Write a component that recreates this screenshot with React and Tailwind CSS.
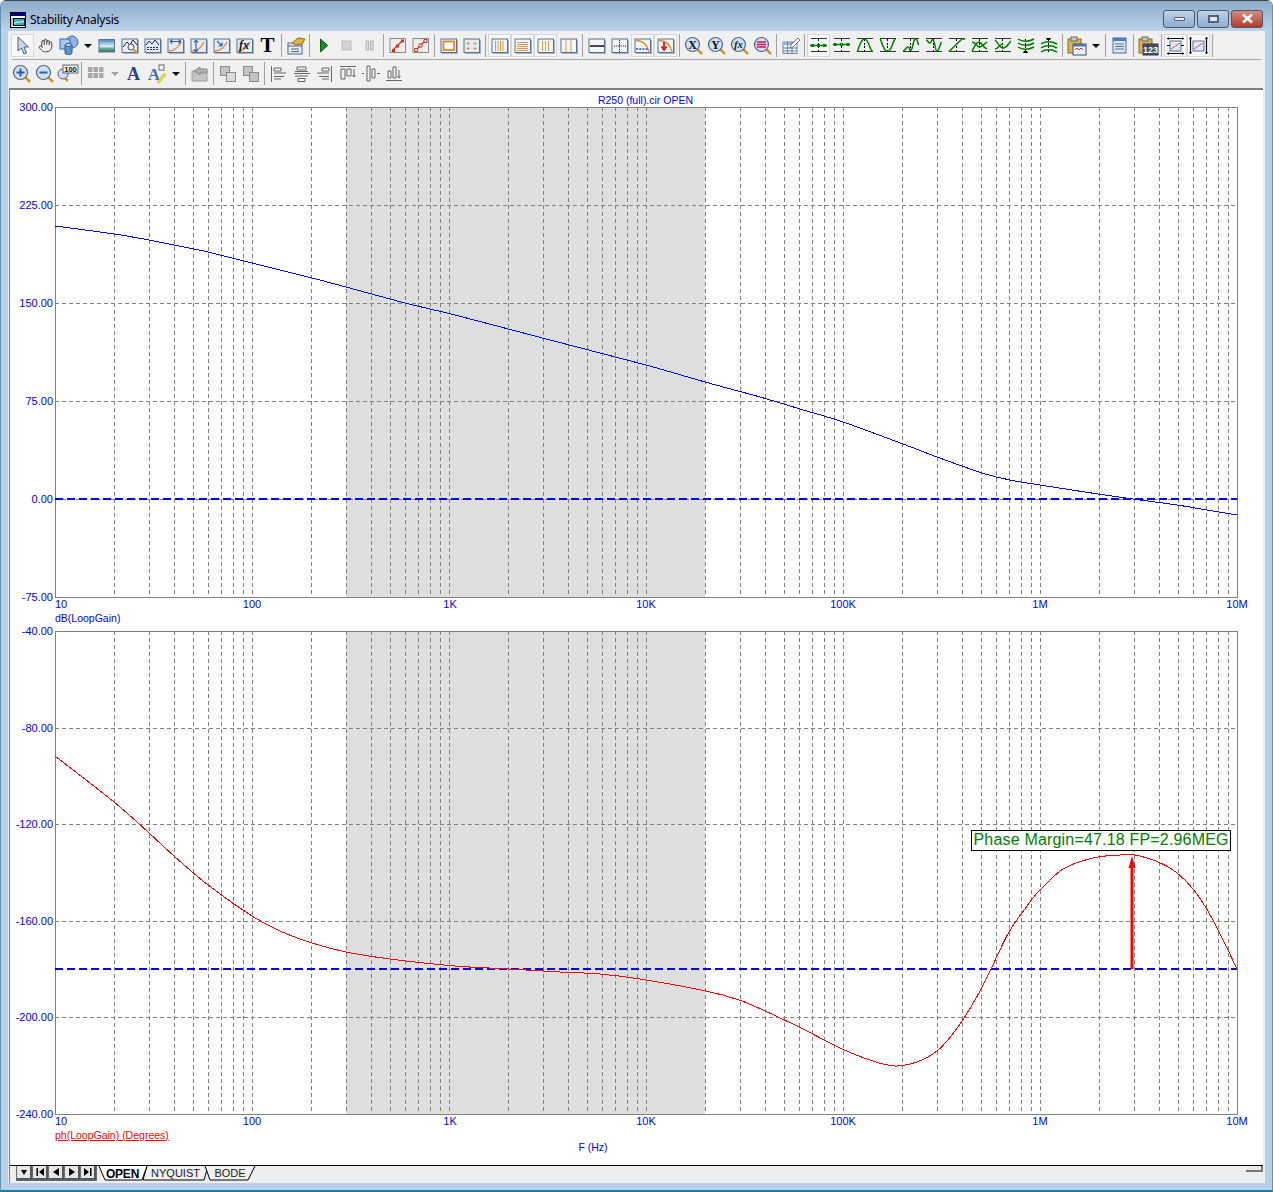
import React from 'react'
import { Hand } from 'lucide-react'

const SERIF = "font-['Liberation_Serif',serif]"
const DECADE = 197
const LEFT = 55
const RIGHT = 1237
const logX = f => LEFT + Math.log10(f / 10) * DECADE

const GRID_X = []
for (let d = 10; d < 1e7; d *= 10) {
  for (let m = 1; m < 10; m++) {
    if (d === 10 && m === 1) continue
    GRID_X.push(Math.round(logX(d * m)) + 0.5)
  }
}

const GAIN = [[55,226],[114,234],[149,240],[174,245],[208,252],[252,263],[312,278],[346,287],[405,303],[455,315],[550,340],[646,365],[705,382],[760,397],[800,409],[843,422],[903,444],[937,457],[962,466],[985,474],[1010,480],[1040,485],[1098,494],[1133,499],[1177,505],[1207,510],[1237,515]]
const PHASE = [[55,756],[114,802],[149,833],[174,856],[208,885],[252,916],[280,931],[312,943],[346,952],[390,959],[455,966],[509,969],[560,972],[600,974],[640,979],[706,991],[739,1000],[765,1011],[799,1027],[842,1049],[867,1059],[883,1064],[897,1066],[917,1062],[937,1051],[955,1031],[975,1000],[991,969],[1009,932],[1030,902],[1040,890],[1063,869],[1093,858],[1120,855],[1140,856],[1170,868],[1193,889],[1213,920],[1237,969]]

// catmull-rom through the read-off points
function smooth(pts) {
  let d = `M${pts[0][0]} ${pts[0][1]}`
  for (let i = 0; i < pts.length - 1; i++) {
    const p0 = pts[i - 1] || pts[i]
    const p1 = pts[i]
    const p2 = pts[i + 1]
    const p3 = pts[i + 2] || p2
    d += `C${p1[0] + (p2[0] - p0[0]) / 6} ${p1[1] + (p2[1] - p0[1]) / 6} ${p2[0] - (p3[0] - p1[0]) / 6} ${p2[1] - (p3[1] - p1[1]) / 6} ${p2[0]} ${p2[1]}`
  }
  return d
}

function Plot({ top, bottom, yLabels }) {
  const h = bottom - top
  return (
    <g>
      <rect x="346" y={top} width="359" height={h} fill="#dedede" />
      <g stroke="#808080" strokeDasharray="4 3" shapeRendering="crispEdges">
        {GRID_X.map(x => <line key={x} x1={x} x2={x} y1={top} y2={bottom} />)}
        {[1, 2, 3, 4].map(i => {
          const y = Math.round(top + (h * i) / 5) + 0.5
          return <line key={i} x1={LEFT} x2={RIGHT} y1={y} y2={y} />
        })}
      </g>
      <rect x={LEFT + 0.5} y={top + 0.5} width={RIGHT - LEFT} height={h} fill="none" stroke="#808080" shapeRendering="crispEdges" />
      <g fontSize="11" fill="#0000ff" textAnchor="end">
        {yLabels.map((t, i) => <text key={t} x="53" y={top + (h * i) / 5 + 4}>{t}</text>)}
      </g>
      <g fontSize="11" fill="#0000ff" textAnchor="middle">
        <text x="61" y={bottom + 11}>10</text>
        {[['100', 252], ['1K', 450], ['10K', 646], ['100K', 843], ['1M', 1040], ['10M', 1237]].map(([t, x]) => (
          <text key={t} x={x} y={bottom + 11}>{t}</text>
        ))}
      </g>
    </g>
  )
}

function Chart() {
  return (
    <svg width="1253" height="1075" viewBox="10 90 1253 1075" className="block">
      <text x="645.5" y="104" fontSize="10.5" fill="#0000ff" textAnchor="middle">R250 (full).cir OPEN</text>
      <Plot top={107} bottom={597} yLabels={['300.00', '225.00', '150.00', '75.00', '0.00', '-75.00']} />
      <Plot top={631} bottom={1114} yLabels={['-40.00', '-80.00', '-120.00', '-160.00', '-200.00', '-240.00']} />
      <line x1={LEFT} x2={RIGHT} y1="499" y2="499" stroke="#0000ff" strokeWidth="2" strokeDasharray="8 4" />
      <line x1={LEFT} x2={RIGHT} y1="969" y2="969" stroke="#0000ff" strokeWidth="2" strokeDasharray="8 4" />
      <path d={smooth(GAIN)} fill="none" stroke="#0000ff" shapeRendering="crispEdges" />
      <path d={smooth(PHASE)} fill="none" stroke="#ff0000" shapeRendering="crispEdges" />
      <line x1="1132" x2="1132" y1="969" y2="862" stroke="#ff0000" strokeWidth="3" />
      <path d="M1132 856l3.500 12h-7z" fill="#ff0000" />
      <text x="55" y="622" fontSize="10.5" fill="#0000ff">dB(LoopGain)</text>
      <text x="55" y="1139" fontSize="10.5" fill="#ff0000" textDecoration="underline">ph(LoopGain) (Degrees)</text>
      <text x="593" y="1151" fontSize="10.5" fill="#0000ff" textAnchor="middle">F (Hz)</text>
      <rect x="971.5" y="830.5" width="259" height="20" fill="#ffffff" stroke="#000000" shapeRendering="crispEdges" />
      <text x="973.5" y="845" fontSize="16" fill="#008000" textLength="255">Phase Margin=47.18 FP=2.96MEG</text>
    </svg>
  )
}

// toolbar icons, 23x23 grid
const Ic = ({ children }) => <svg width="23" height="23" viewBox="0 0 23 23">{children}</svg>
const Frame = ({ fill = '#e3ebf5' }) => (
  <g>
    <rect x="5" y="6" width="16" height="14" fill="#a8b2c0" />
    <rect x="4" y="5" width="15.5" height="13.5" fill={fill} stroke="#5b7090" />
  </g>
)
const Curve = () => <path d="M5 17c5 0 9-3 12-9" fill="none" stroke="#ee8a22" strokeWidth="1.4" />
const Lens = ({ children }) => (
  <g>
    <path d="M15 15l5 5" stroke="#c99a2e" strokeWidth="2.5" />
    <circle cx="10.5" cy="10.5" r="7" fill="#cfe0f5" stroke="#51657f" strokeWidth="1.2" />
    {children}
  </g>
)
const Green = ({ d, children, lines = true }) => (
  <Ic>
    {lines && <path d="M3.500 4.500h16M3.500 17.500h16" stroke="#333" shapeRendering="crispEdges" />}
    <path d="M11.500 5v13" stroke="#000" strokeDasharray="2 1.500" shapeRendering="crispEdges" />
    {d && <path d={d} fill="none" stroke="#008000" strokeWidth="1.500" />}
    {children}
  </Ic>
)
const Squares = ({ shade }) => (
  <g stroke="#8a8a8a">
    <rect x="4.500" y="4.500" width="9" height="9" fill="#c4c4c4" />
    <rect x="10.500" y="10.500" width="9" height="9" fill={shade} />
  </g>
)
const Align = ({ d }) => <Ic><path d={d} fill="none" stroke="#666" /></Ic>
const SerifMark = ({ children, y = 14.5, size = 12, italic }) => (
  <text x="10.5" y={y} fontSize={size} fontWeight="700" fontStyle={italic ? 'italic' : 'normal'} textAnchor="middle" fill="#111" className={SERIF}>{children}</text>
)

const ICONS = {
  arrow: <Ic><path d="M7 3v14l3.500-3 2.500 6 2.500-1-2.500-6h4.500z" fill="#c8d6ea" stroke="#4d5f7c" /></Ic>,
  hand: <Ic><g transform="translate(4 4)"><Hand size={15} color="#444" strokeWidth={1.6} /></g></Ic>,
  shapes: (
    <Ic>
      <circle cx="15" cy="8" r="6" fill="#8db6e6" stroke="#3a6aa8" />
      <rect x="3" y="5" width="10" height="10" fill="#a9c8ee" stroke="#3a6aa8" />
      <path d="M8 11v8c0 2 7 2 7 0v-8z" fill="#5f92d1" stroke="#2f5c97" />
      <ellipse cx="11.500" cy="11" rx="3.500" ry="1.500" fill="#bcd6f4" stroke="#2f5c97" />
    </Ic>
  ),
  picture: (
    <Ic>
      <defs>
        <linearGradient id="sky" x1="0" y1="0" x2="0" y2="1">
          <stop offset="0" stopColor="#3d86c6" />
          <stop offset="0.55" stopColor="#dff0f5" />
          <stop offset="0.7" stopColor="#6fb38a" />
          <stop offset="1" stopColor="#2f6f7d" />
        </linearGradient>
      </defs>
      <rect x="4" y="5.500" width="15.500" height="12.500" fill="url(#sky)" stroke="#5f738f" />
    </Ic>
  ),
  zoomFrame: <Ic><Frame /><path d="M5 13l4-5 3 3 3-5 4 5" fill="none" stroke="#222" /><circle cx="13" cy="13" r="3" fill="#eaf2fb" stroke="#555" /><path d="M15 15l4 4" stroke="#c99a2e" strokeWidth="2" /></Ic>,
  dataFrame: <Ic><Frame /><path d="M5 11l3-4 3 3 3-4 4 5" fill="none" stroke="#1c2f6b" /><path d="M6 13.500h11M6 15.500h11" stroke="#1c2f6b" strokeDasharray="2 1" /></Ic>,
  fitX: <Ic><Frame /><Curve /><path d="M6 7.500h11M6 7.500l2.500-2M6 7.500l2.500 2M17 7.500l-2.500-2M17 7.500l-2.500 2" stroke="#2368b8" fill="none" strokeWidth="1.200" /></Ic>,
  fitY: <Ic><Frame /><Curve /><path d="M9 6v12M9 6l-2 2.500M9 6l2 2.500M9 18l-2-2.500M9 18l2-2.500" stroke="#2368b8" fill="none" strokeWidth="1.200" /></Ic>,
  fitXY: <Ic><Frame /><Curve /><path d="M7 7l5 5M12 12v-3.500M12 12h-3.500" stroke="#2368b8" fill="none" strokeWidth="1.200" /></Ic>,
  fx: <Ic><Frame /><Curve /><text x="6" y="15" fontSize="12" fontStyle="italic" fontWeight="700" fill="#111" className={SERIF}>fx</text></Ic>,
  bigT: <Ic><text x="11.500" y="18" fontSize="21" fontWeight="700" textAnchor="middle" fill="#000" className={SERIF}>T</text></Ic>,
  props: <Ic><rect x="4" y="9" width="14" height="11" fill="#e8eef6" stroke="#4d6280" /><path d="M4 12h14M7 15h8M7 17.500h8" stroke="#4d6280" /><path d="M8 9l6-5 7 1-3 5-6 1z" fill="#e3b23c" stroke="#8d6a16" /></Ic>,
  play: <Ic><path d="M8.500 5l7 6.500-7 6.500z" fill="#1b8a2a" stroke="#0e5c19" /></Ic>,
  stop: <Ic><rect x="7" y="7" width="9" height="9" fill="#d2d2d2" stroke="#bdbdbd" /></Ic>,
  pause: <Ic><path d="M8 7h2.500v9H8zM12.500 7H15v9h-2.500z" fill="#dcdcdc" stroke="#b0b0b0" /></Ic>,
  stepA: <Ic><rect x="4" y="4.500" width="15.500" height="14" fill="#f2ede8" stroke="#8a8a8a" /><path d="M6 17L17 6" stroke="#d3302b" strokeWidth="1.300" /><path d="M6 15h3v3H6zM10 10.500h3v3h-3zM15 5.500h3v3h-3z" fill="#d3302b" /></Ic>,
  stepB: <Ic><rect x="4" y="4.500" width="15.500" height="14" fill="#f2ede8" stroke="#8a8a8a" /><path d="M6 17L17 6" stroke="#d3302b" strokeWidth="1.300" /><path d="M5.500 14.500h3v3h-3zM10 10h3v3h-3zM15 5.500h3v3h-3z" fill="#f2ede8" stroke="#d3302b" /></Ic>,
  border: <Ic><Frame /><rect x="6.500" y="7.500" width="10.500" height="8.500" fill="#fff" stroke="#f07c00" strokeWidth="1.600" /></Ic>,
  corners: <Ic><Frame /><path d="M8 8v3M6.500 9.500h3M15 8v3M13.500 9.500h3M8 13v3M6.500 14.500h3M15 13v3M13.500 14.500h3" stroke="#ee8a22" /></Ic>,
  vert4: <Ic><Frame fill="#f2f5fa" /><path d="M7.500 7v10M10 7v10M12.500 7v10M15 7v10" stroke="#e29a3f" /></Ic>,
  horiz: <Ic><Frame fill="#f2f5fa" /><path d="M6 8.500h11M6 10.500h11M6 12.500h11M6 14.500h11M6 16.500h11" stroke="#e29a3f" /></Ic>,
  vert3: <Ic><Frame fill="#f2f5fa" /><path d="M8.500 7v10M11.500 7v10M14.500 7v10" stroke="#e29a3f" /></Ic>,
  vert2: <Ic><Frame fill="#f2f5fa" /><path d="M9 5v13M14 5v13" stroke="#e29a3f" /></Ic>,
  hline: <Ic><Frame fill="#f2f5fa" /><path d="M5 12h14" stroke="#000" strokeWidth="1.400" /></Ic>,
  cross: <Ic><Frame fill="#f2f5fa" /><path d="M6 12h12M11.500 6v12" stroke="#000" strokeDasharray="1 1.200" /></Ic>,
  arcLine: <Ic><Frame fill="#f2f5fa" /><path d="M5 6.500c6 0 11 4 13 11" fill="none" stroke="#ee8a22" strokeWidth="1.300" /><path d="M5 15h12" stroke="#1f3fcf" strokeWidth="1.300" strokeDasharray="2 1.200" /></Ic>,
  arcDown: <Ic><Frame fill="#f2f5fa" /><path d="M5 6.500c6 0 11 4 13 11" fill="none" stroke="#ee8a22" strokeWidth="1.300" /><path d="M10 8v7M7.500 12.500l2.500 3.500 2.500-3.500" fill="none" stroke="#e01515" strokeWidth="1.800" /></Ic>,
  lensX: <Ic><Lens><SerifMark>X</SerifMark></Lens></Ic>,
  lensY: <Ic><Lens><SerifMark>Y</SerifMark></Lens></Ic>,
  lensFx: <Ic><Lens><SerifMark y={14} size={10} italic>fx</SerifMark></Lens></Ic>,
  lensBars: <Ic><Lens><path d="M6 8h9M5.500 10.500h10M6 13h9" stroke="#d0104a" strokeWidth="1.600" /></Lens></Ic>,
  table: <Ic><rect x="4" y="8" width="14" height="11.500" fill="#eef3fa" stroke="#6f86a8" /><rect x="4" y="8" width="14" height="3" fill="#8fb0de" /><path d="M8.500 8v11M13 8v11M4 14h14M4 17h14" stroke="#6f86a8" /><path d="M12 11l7-7 2 2-7 7-3 1z" fill="#fff" stroke="#777" /></Ic>,
  g1: <Green d="M3 11.500h17"><path d="M4 10h3v3H4zM10 10h3v3h-3zM16 10h3v3h-3z" fill="#008000" /></Green>,
  g2: <Green d="M3 10.500h17"><path d="M3.500 9h3v3h-3zM10 9h3v3h-3zM16.500 9h3v3h-3z" fill="#008000" /></Green>,
  g3: <Green d="M4 17.500C6 16 7 5 11.500 5s5 11 8 12.500" />,
  g4: <Green d="M4 5c2 1.500 3 12.500 7.500 12.500S16.500 6.500 19.500 5" />,
  g5: <Green d="M4 17c2 0 3-4 5-4s1 4 3 3 2-10 4-11 3 4 3.500 6" />,
  g6: <Green d="M4 6c2 0 2 3 4 3s1-4 3-3 2 11 4 11 3-7 4.500-9" />,
  g7: <Green d="M4 17.500L17 5h3" />,
  g8: <Green d="M4 17c2-3 4-9 7-9s4 6 8 7M4 8c3 0 5 4 7 5s5-3 8-5" />,
  g9: <Green d="M4 6c3 2 4 8 8 8s5-4 8-7M4 15c3 0 5-5 8-5" />,
  g10: <Green lines={false} d="M4 5c4 3 11 3 16 0M4 9c4 3 11 3 16 0M4 13c4 3 11 3 16 0"><path d="M9 19h5l-1-2h-3z" fill="#000" /></Green>,
  g11: <Green lines={false} d="M4 18c4-3 11-3 16 0M4 14c4-3 11-3 16 0M4 10c4-3 11-3 16 0"><path d="M9 4h5l-1 2h-3z" fill="#000" /></Green>,
  clipWave: <Ic><rect x="3" y="5" width="13" height="14" fill="#d9b55a" stroke="#8d6a16" /><rect x="6" y="3" width="6" height="4" fill="#c9c9c9" stroke="#666" /><rect x="8" y="10" width="13" height="11" fill="#f0f4fa" stroke="#33507a" /><rect x="8" y="10" width="13" height="2.500" fill="#4c74a8" /><path d="M10 16l2-2 2 2 2-2 2 2" stroke="#d3302b" fill="none" /></Ic>,
  doc: <Ic><rect x="5" y="4" width="13" height="15" fill="#dbe6f6" stroke="#3f6ab0" /><rect x="5" y="4" width="13" height="3" fill="#4b7cc8" /><path d="M7 10h9M7 12.500h9M7 15h9" stroke="#5a6f90" /></Ic>,
  clip123: (
    <Ic>
      <rect x="3" y="5" width="13" height="14" fill="#d9b55a" stroke="#8d6a16" />
      <rect x="6" y="3" width="6" height="4" fill="#c9c9c9" stroke="#666" />
      <rect x="7" y="10" width="15" height="11" fill="#3f4f63" stroke="#2f3c4e" />
      <text x="14.500" y="19" fontSize="9" fontWeight="700" textAnchor="middle" fill="#fff">123</text>
    </Ic>
  ),
  fitH: <Ic><rect x="6" y="7" width="11" height="10" fill="#dbe6f6" stroke="#5f738f" /><path d="M7 15l9-6" stroke="#e0505a" /><path d="M3 4.500h17M3 19.500h17M3 11.500h3M17 11.500h3" stroke="#000" strokeWidth="1.200" /><path d="M3 4.500l2-1.500v3zM20 4.500l-2-1.500v3zM3 19.500l2-1.500v3zM20 19.500l-2-1.500v3z" /></Ic>,
  fitV: <Ic><rect x="6" y="7" width="11" height="10" fill="#dbe6f6" stroke="#5f738f" /><path d="M7 15l9-6" stroke="#e0505a" /><path d="M3.500 3v17M19.500 3v17" stroke="#000" strokeWidth="1.200" /><path d="M3.500 3L2 5h3zM19.500 3L18 5h3zM3.500 20L2 18h3zM19.500 20L18 18h3z" /></Ic>,
  zoomIn: <Ic><Lens><path d="M6.500 10.500h8M10.500 6.500v8" stroke="#2c5f9e" strokeWidth="2" /></Lens></Ic>,
  zoomOut: <Ic><Lens><path d="M6.500 10.500h8" stroke="#2c5f9e" strokeWidth="2" /></Lens></Ic>,
  zoom100: (
    <Ic>
      <path d="M8 15l4 4" stroke="#c99a2e" strokeWidth="2.500" />
      <circle cx="7" cy="12" r="5" fill="#cfe0f5" stroke="#51657f" />
      <rect x="7" y="3" width="15" height="8" fill="#f4f4f4" stroke="#666" />
      <text x="14.500" y="10" fontSize="7.500" fontWeight="700" textAnchor="middle" fill="#111">100</text>
    </Ic>
  ),
  grid: <Ic><path d="M4 5h4.500v5H4zM9.500 5H14v5H9.500zM15 5h4.500v5H15zM4 11h4.500v5H4zM9.500 11H14v5H9.500zM15 11h4.500v5H15z" fill="#a8a8a8" /></Ic>,
  fontA: <Ic><text x="11.500" y="18" fontSize="18" fontWeight="700" textAnchor="middle" fill="#1d4580" className={SERIF}>A</text></Ic>,
  fontColor: (
    <Ic>
      <text x="9" y="18" fontSize="17" fontWeight="700" textAnchor="middle" fill="#3b6fb5" className={SERIF}>A</text>
      <rect x="14" y="3" width="5" height="5" fill="#fff" stroke="#666" />
      <path d="M12 20l7-9 2 2-7 8z" fill="#f4dc38" stroke="#b69f1d" strokeWidth="0.500" />
    </Ic>
  ),
  folder: <Ic><path d="M4 9h15v10H4z" fill="#c4c4c4" stroke="#9a9a9a" /><path d="M6 9l6-4v2h7v4h-7v2z" fill="#b0b0b0" stroke="#8a8a8a" /></Ic>,
  front: <Ic><Squares shade="#dcdcdc" /></Ic>,
  back: <Ic><Squares shade="#c4c4c4" /></Ic>,
  alignL: <Align d="M4.500 4v16M7 6h7v3H7zM7 11h12M7 14.500h10M7 17h7" />,
  alignC: <Align d="M4 11.500h16M7 5h9v3H7zM5 9.500h13M5 14h13M8 16.500h7v3H8z" />,
  alignR: <Align d="M18.500 4v16M9 6h7v3H9zM4 11h12M6 14.500h10M9 17h7" />,
  alignT: <Align d="M4 4.500h16M5 7h4v10H5zM11 7h4v7h-4zM18 7v8M16.500 13l1.500 2 1.500-2" />,
  alignM: <Align d="M3 11.500h2M8 4h3v15H8zM13 7h3v9h-3zM18 11.500h3" />,
  alignB: <Align d="M4 18.500h16M6 9h3v7H6zM11 5h3v11h-3zM17 8v8M15.500 14l1.500 2 1.500-2" />,
}

const ROW_1 = ['arrow*', 'hand', 'shapes', '>', 'picture', 'zoomFrame', 'dataFrame', 'fitX', 'fitY', 'fitXY', 'fx', 'bigT', '|', 'props', '|', 'play', 'stop', 'pause', '|', 'stepA', 'stepB', '|', 'border', 'corners', '|', 'vert4*', 'horiz*', 'vert3*', 'vert2', '|', 'hline', 'cross', 'arcLine*', 'arcDown*', '|', 'lensX', 'lensY', 'lensFx', 'lensBars', '|', 'table', '|', 'g1*', 'g2', 'g3', 'g4', 'g5', 'g6', 'g7', 'g8', 'g9', 'g10', 'g11', '|', 'clipWave', '>', '|', 'doc', '|', 'clip123', '|', 'fitH*', 'fitV*', '|']
const ROW_2 = ['zoomIn', 'zoomOut', 'zoom100', '|', 'grid', '~', 'fontA', 'fontColor', '>', '|', 'folder', '|', 'front', 'back', '|', 'alignL', 'alignC', 'alignR', 'alignT', 'alignM', 'alignB']

function ToolItem({ name }) {
  if (name === '|') {
    return (
      <div className="w-[5px] h-[23px] flex justify-center">
        <div className="w-px h-full bg-[#a0a0a0]" />
      </div>
    )
  }
  if (name === '>' || name === '~') {
    return (
      <div className="w-[15px] h-[23px] flex items-center justify-center">
        <div className={`w-0 h-0 border-x-[4px] border-x-transparent border-t-[4px] ${name === '>' ? 'border-t-black' : 'border-t-[#a0a0a0]'}`} />
      </div>
    )
  }
  const selected = name.endsWith('*')
  return (
    <div className={`w-[23px] h-[23px] ${selected ? 'bg-[#f8f8f8] outline outline-[#d8d8d8] -outline-offset-1' : ''}`}>
      {ICONS[selected ? name.slice(0, -1) : name]}
    </div>
  )
}

const WIN_BTN = 'w-[32px] h-[18px] rounded-[3px] border border-[#46596f] flex items-center justify-center'

function TitleBar() {
  return (
    <div className="h-[31px] flex items-center pl-[9px] pr-[9px] pt-[7px] border-t border-[#3c4650] bg-linear-to-b from-[#8eabc9] to-[#bad2ec]">
      <svg width="16" height="16" viewBox="0 0 16 16" className="shrink-0">
        <rect width="16" height="16" fill="#fff" />
        <rect width="16" height="4" fill="#000080" />
        <rect x="0.500" y="0.500" width="15" height="15" fill="none" stroke="#000" />
        <rect x="3.500" y="6.500" width="11" height="7" fill="#29b3c6" stroke="#000" />
        <path d="M4 12c3-4 5 0 10-3" stroke="#fff" fill="none" />
        <path d="M1.500 7h1M1.500 9h1M1.500 11h1M1.500 13h1" stroke="#000" />
      </svg>
      <div className="ml-[4px] text-[12px] tracking-[-0.25px] text-black font-['Noto_Sans',sans-serif]">Stability Analysis</div>
      <div className="ml-auto flex gap-[2px] -mt-[2px]">
        <div className={`${WIN_BTN} bg-linear-to-b from-[#bcd2e8] to-[#8fadcc]`}>
          <div className="w-[11px] h-[4px] rounded-[1px] bg-[#e8eef5] border border-[#4d6280]" />
        </div>
        <div className={`${WIN_BTN} bg-linear-to-b from-[#bcd2e8] to-[#8fadcc]`}>
          <div className="w-[11px] h-[8px] bg-[#dfe8f2] border-2 border-[#4d6280]" />
        </div>
        <div className={`${WIN_BTN} bg-linear-to-b from-[#d98a7e] to-[#b03a2c]`}>
          <svg width="13" height="11" viewBox="0 0 13 11">
            <path d="M2 1.500l9 8M11 1.500l-9 8" stroke="#fff" strokeWidth="2.600" />
          </svg>
        </div>
      </div>
    </div>
  )
}

function NavButton({ d }) {
  return (
    <div className="w-[15px] h-[14px] bg-[#e6e6e6] border-r-2 border-b-2 border-[#555] flex items-center justify-center">
      <svg width="10" height="10" viewBox="0 0 10 10"><path d={d} fill="#000" /></svg>
    </div>
  )
}

function Tab({ label, box, viewBox, points, fill, className }) {
  return (
    <div className={`relative h-[15px] flex items-center justify-center ${box} ${className}`}>
      <svg viewBox={viewBox} className="absolute inset-0 w-full h-full">
        <polyline points={points} fill={fill} stroke="#000" />
      </svg>
      <span className="relative">{label}</span>
    </div>
  )
}

function TabBar() {
  return (
    <div className="h-[18px] border-t border-black bg-[#eeeeee] flex relative">
      <div className="ml-[6px] w-[81px] h-[15px] bg-[#6a6a6a] flex gap-px pl-[1px]">
        <NavButton d="M2 3h6L5 8z" />
        <NavButton d="M1.500 1h1.500v8H1.500zM9 1v8L4 5z" />
        <NavButton d="M8 1v8L2 5z" />
        <NavButton d="M2 1v8l6-4z" />
        <NavButton d="M1 1v8l5-4zM7 1h1.500v8H7z" />
      </div>
      <div className="flex">
        <Tab label="OPEN" box="w-[51px]" viewBox="0 0 51 15" points="2,0 8,14 45,14 50,0" fill="#ffffff" className="z-10 text-[12px] font-bold tracking-[-0.2px] text-black" />
        <Tab label="NYQUIST" box="w-[65px]" viewBox="0 0 65 15" points="4,0 0,14 61,14 65,0" fill="#f0f0f0" className="-ml-[5px] text-[11px] text-[#222]" />
        <Tab label="BODE" box="w-[52px]" viewBox="0 0 52 15" points="1,0 6,14 44,14 51,0" fill="#f0f0f0" className="-ml-[4px] text-[11px] text-[#222]" />
      </div>
      <div className="absolute right-0 top-0 w-[17px] h-[6px] bg-[#e8e8e8] border-r-2 border-b-2 border-[#777]" />
    </div>
  )
}

export default function App() {
  return (
    <div className="w-[1273px] h-[1192px] flex flex-col bg-[#b8d0ea] border-x border-b-2 border-x-[#5f93ad] border-b-[#1d7f97] rounded-t-[6px] overflow-hidden font-['Liberation_Sans',Arial,sans-serif]">
      <TitleBar />
      <div className="mx-[7px] flex-1 flex flex-col bg-[#f0f0f0] mb-[7px]">
        <div className="h-[28px] pl-[3px] pt-[3px] flex items-start">
          {ROW_1.map((n, i) => <ToolItem key={i} name={n} />)}
        </div>
        <div className="mx-[4px] h-px bg-[#a8a8a8]" />
        <div className="h-[28px] pl-[2px] pt-[2px] flex items-start">
          {ROW_2.map((n, i) => <ToolItem key={i} name={n} />)}
        </div>
        <div className="flex-1 flex flex-col ml-[1px] mr-[2px] border-t-2 border-l border-[#808080] bg-white">
          <Chart />
          <TabBar />
        </div>
      </div>
    </div>
  )
}
